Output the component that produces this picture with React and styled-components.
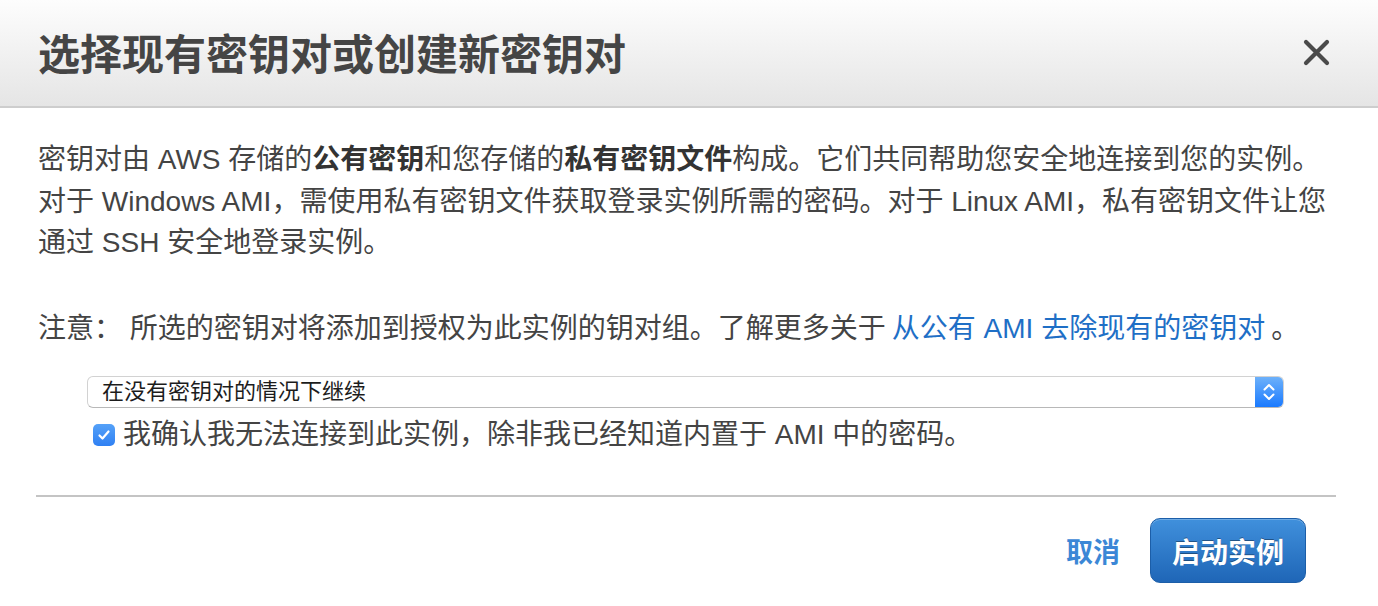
import styled, { createGlobalStyle } from "styled-components";

const Global = createGlobalStyle`
  html, body {
    margin: 0;
    padding: 0;
    background: #fff;
  }
  body {
    font-family: "Liberation Sans", "Noto Sans CJK SC", sans-serif;
    color: #444;
  }
`;

const Dialog = styled.div`
  width: 1378px;
  height: 606px;
  display: flex;
  flex-direction: column;
  background: #fff;
  overflow: hidden;
`;

const Header = styled.header`
  height: 108px;
  flex-shrink: 0;
  display: flex;
  align-items: center;
  justify-content: space-between;
  padding: 0 48px 2px 38px;
  background: linear-gradient(#fdfdfd, #e5e5e5);
  border-bottom: 2px solid #cdcdcd;
  box-sizing: border-box;
`;

const Title = styled.h2`
  margin: 0;
  font-family: "Noto Sans CJK SC", sans-serif;
  font-size: 42px;
  font-weight: 700;
  color: #454545;
  line-height: 1;
`;

const Close = styled.button`
  width: 28px;
  height: 28px;
  padding: 0;
  border: 0;
  background: none;
  display: flex;
  align-items: center;
  justify-content: center;
  cursor: pointer;
`;

const Body = styled.div`
  padding: 31px 42px 0 38px;
  font-size: 28px;
  line-height: 41.5px;
  color: #444;
`;

const Paragraph = styled.p`
  margin: 0;
  white-space: nowrap;
`;

const Note = styled.p`
  margin: 44px 0 0;
  white-space: nowrap;
`;

const Strong = styled.b`
  font-weight: 700;
  color: #333;
`;

const Link = styled.a`
  color: #1f6fc6;
  text-decoration: none;
  margin: 0 6px;
`;

const Options = styled.div`
  margin: 27px 0 0 49px;
  width: 1197px;
  display: flex;
  flex-direction: column;
`;

const Select = styled.div`
  height: 32px;
  display: flex;
  align-items: stretch;
  border: 1px solid #d2d2d2;
  border-bottom-color: #b8b8b8;
  border-radius: 6px;
  box-sizing: border-box;
  background: #fff;
  overflow: hidden;
`;

const SelectText = styled.span`
  flex: 1;
  padding-left: 14px;
  font-size: 22px;
  line-height: 30px;
  color: #1c1c1c;
`;

const Stepper = styled.span`
  width: 28px;
  display: flex;
  align-items: center;
  justify-content: center;
  background: linear-gradient(#6db1fa, #1a7aff);
`;

const CheckRow = styled.label`
  margin: 14px 0 0 6px;
  display: flex;
  align-items: center;
  gap: 8px;
  font-size: 28px;
  line-height: 26px;
  color: #444;
  white-space: nowrap;
`;

const Box = styled.span`
  width: 22px;
  height: 22px;
  border-radius: 5px;
  background: linear-gradient(#55a1f8, #2f80f3);
  display: flex;
  align-items: center;
  justify-content: center;
  flex-shrink: 0;
`;

const Footer = styled.footer`
  margin: 47px 42px 0 36px;
  padding: 21px 30px 0 0;
  border-top: 2px solid #c4c4c4;
  display: flex;
  justify-content: flex-end;
  align-items: center;
  gap: 30px;
`;

const CancelLink = styled.a`
  font-family: "Noto Sans CJK SC", sans-serif;
  font-size: 27px;
  font-weight: 700;
  color: #3b87d6;
  cursor: pointer;
`;

const Primary = styled.button`
  height: 65px;
  padding: 0 21px;
  border: 1px solid #1c5ea8;
  border-radius: 10px;
  background: linear-gradient(#4090dc, #1f66b7);
  box-shadow: inset 0 1px 0 rgba(255, 255, 255, 0.25);
  color: #fff;
  font-family: "Noto Sans CJK SC", sans-serif;
  font-size: 28px;
  font-weight: 700;
  text-shadow: 0 -1px 0 rgba(0, 0, 0, 0.35);
  cursor: pointer;
`;

export default function App() {
  return (
    <>
      <Global />
      <Dialog>
        <Header>
          <Title>选择现有密钥对或创建新密钥对</Title>
          <Close aria-label="关闭">
            <svg width="27" height="27" viewBox="0 0 27 27">
              <path d="M3 3 L24 24 M24 3 L3 24" stroke="#4a4a4a" strokeWidth="4.2" strokeLinecap="round" />
            </svg>
          </Close>
        </Header>
        <Body>
          <Paragraph>
            密钥对由 AWS 存储的<Strong>公有密钥</Strong>和您存储的<Strong>私有密钥文件</Strong>构成。它们共同帮助您安全地连接到您的实例。
            <br />
            对于 Windows AMI，需使用私有密钥文件获取登录实例所需的密码。对于 Linux AMI，私有密钥文件让您
            <br />
            通过 SSH 安全地登录实例。
          </Paragraph>
          <Note>
            注意： 所选的密钥对将添加到授权为此实例的钥对组。了解更多关于
            <Link>从公有 AMI 去除现有的密钥对</Link>。
          </Note>
          <Options>
            <Select>
              <SelectText>在没有密钥对的情况下继续</SelectText>
              <Stepper>
                <svg width="14" height="20" viewBox="0 0 14 20">
                  <path d="M2.5 7.5 L7 3 L11.5 7.5 M2.5 12.5 L7 17 L11.5 12.5" fill="none" stroke="#fff" strokeWidth="2" strokeLinecap="round" strokeLinejoin="round" />
                </svg>
              </Stepper>
            </Select>
            <CheckRow>
              <Box>
                <svg width="14" height="14" viewBox="0 0 14 14">
                  <path d="M2.5 7.5 L5.5 10.5 L11.5 3.5" fill="none" stroke="#fff" strokeWidth="2.2" strokeLinecap="round" strokeLinejoin="round" />
                </svg>
              </Box>
              我确认我无法连接到此实例，除非我已经知道内置于 AMI 中的密码。
            </CheckRow>
          </Options>
        </Body>
        <Footer>
          <CancelLink>取消</CancelLink>
          <Primary>启动实例</Primary>
        </Footer>
      </Dialog>
    </>
  );
}
